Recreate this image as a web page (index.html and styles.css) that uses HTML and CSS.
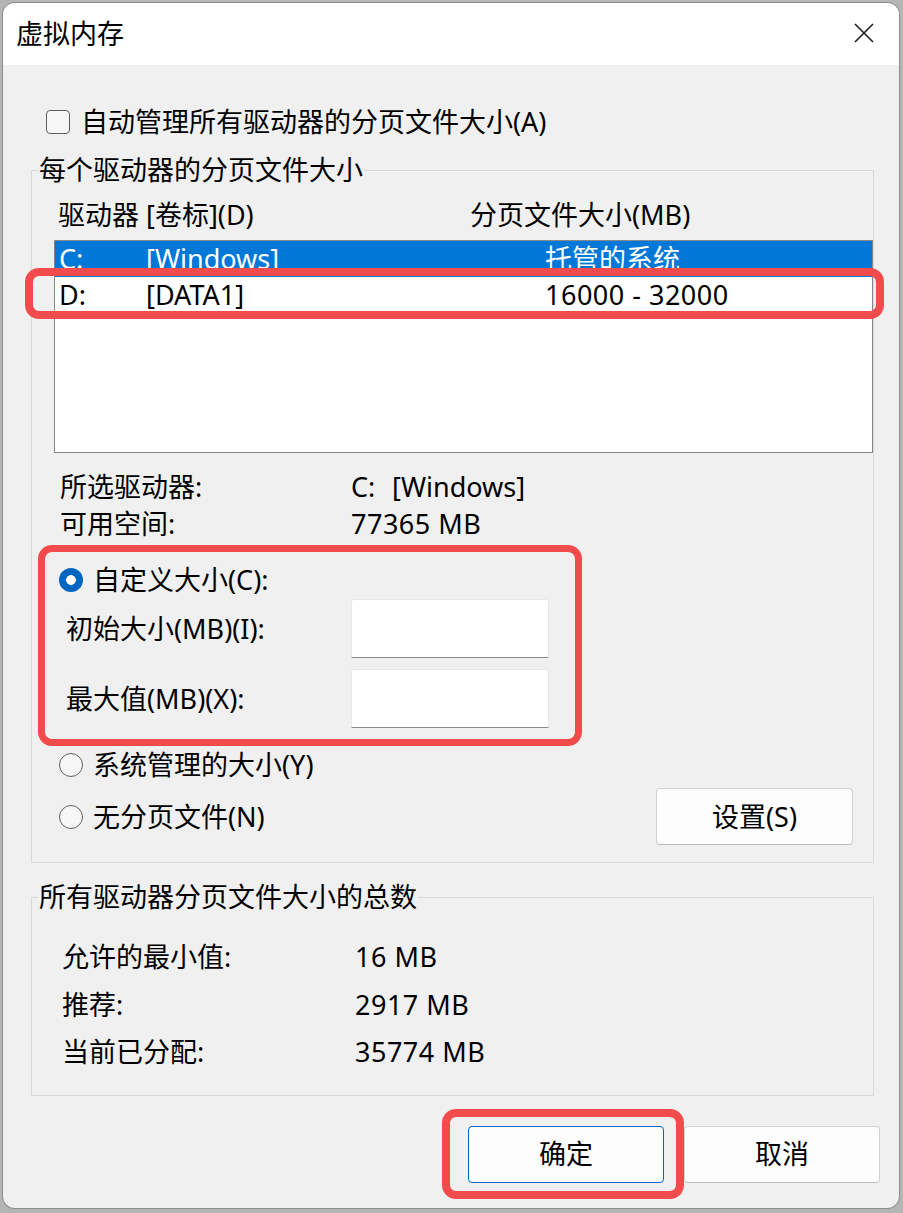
FILE: index.html
```html
<!DOCTYPE html>
<html lang="zh-CN">
<head>
<meta charset="utf-8">
<title>虚拟内存</title>
<link rel="stylesheet" href="styles.css">
</head>
<body>
<div class="screen">
  <div class="window">
    <header class="titlebar">
      <span class="title">虚拟内存</span>
      <svg class="close" viewBox="0 0 20 20" aria-label="关闭"><path d="M1 1L19 19M19 1L1 19" stroke="#1b1b1b" stroke-width="1.6" fill="none"/></svg>
    </header>
    <main class="body">
      <div class="check-row"><span class="checkbox"></span><span>自动管理所有驱动器的分页文件大小(A)</span></div>

      <fieldset class="group group-drives">
        <legend>每个驱动器的分页文件大小</legend>
        <div class="cols"><span class="col-drive">驱动器 [卷标](D)</span><span>分页文件大小(MB)</span></div>
        <div class="listbox">
          <div class="lrow sel"><span>C:</span><span>[Windows]</span><span>托管的系统</span></div>
          <div class="lrow"><span>D:</span><span>[DATA1]</span><span class="num">16000 - 32000</span></div>
        </div>
        <div class="info">
          <div class="irow"><span>所选驱动器:</span><span><span class="drv">C:</span>[Windows]</span></div>
          <div class="irow"><span>可用空间:</span><span class="num">77365 MB</span></div>
        </div>
        <div class="radio-row first"><span class="radio on"></span><span>自定义大小(C):</span></div>
        <div class="field-row"><span class="flabel">初始大小(MB)(I):</span><span class="input"></span></div>
        <div class="field-row second"><span class="flabel">最大值(MB)(X):</span><span class="input"></span></div>
        <div class="radio-row sys"><span class="radio"></span><span>系统管理的大小(Y)</span></div>
        <div class="last-row">
          <div class="radio-line"><span class="radio"></span><span>无分页文件(N)</span></div>
          <button class="btn set">设置(S)</button>
        </div>
      </fieldset>

      <fieldset class="group group-total">
        <legend>所有驱动器分页文件大小的总数</legend>
        <div class="trow"><span>允许的最小值:</span><span class="num">16 MB</span></div>
        <div class="trow"><span>推荐:</span><span class="num">2917 MB</span></div>
        <div class="trow"><span>当前已分配:</span><span class="num">35774 MB</span></div>
      </fieldset>

      <div class="actions">
        <button class="btn primary">确定</button>
        <button class="btn">取消</button>
      </div>
    </main>
  </div>
  <div class="mark mark-row"></div>
  <div class="mark mark-custom"></div>
  <div class="mark mark-ok"></div>
</div>
</body>
</html>
```
FILE: styles.css
```css
* { box-sizing: border-box; }
html, body { margin: 0; padding: 0; }
body {
  background: #b5b5b5;
  width: 903px;
  height: 1213px;
  overflow: hidden;
  font-family: "Noto Sans", "Noto Sans CJK SC", sans-serif;
  font-size: 27px;
  color: #000;
}
.screen {
  position: relative;
  width: 903px;
  height: 1213px;
  padding: 3px 0 0 3px;
}
.window {
  width: 896px;
  height: 1205px;
  background: #f0f0f0;
  border-radius: 12px;
  overflow: hidden;
  box-shadow: 0 0 0 1px #8c8c8c;
  display: flex;
  flex-direction: column;
}
.titlebar {
  height: 62px;
  flex: none;
  background: #fff;
  display: flex;
  align-items: center;
  justify-content: space-between;
  padding: 0 25px 0 13px;
}
.title { line-height: 30px; }
.close { width: 20px; height: 20px; margin-top: -2px; }

.body { padding: 39px 25px 0 28px; }

.num { letter-spacing: 0.5px; }

.check-row {
  display: flex;
  align-items: center;
  gap: 11px;
  height: 36px;
  padding-left: 15px;
  line-height: 36px;
}
.checkbox {
  width: 24px;
  height: 24px;
  border: 1.5px solid #5f5f5f;
  border-radius: 4px;
  background: #f6f6f6;
  flex: none;
}

.group {
  margin: 0;
  padding: 0;
  min-width: 0;
  border: 1px solid #d9d9d9;
}
.group legend {
  padding: 0 1px;
  margin-left: 6px;
  line-height: 30px;
  font-size: 27px;
}
.group-drives { margin-top: 15px; padding-bottom: 17px; }

.cols {
  display: flex;
  margin-top: 15px;
  padding-left: 26px;
  line-height: 30px;
}
.col-drive { width: 412px; }

.listbox {
  margin: 10px 0 0 22px;
  height: 213px;
  background: #fff;
  border: 1px solid #86888c;
}
.lrow {
  display: grid;
  grid-template-columns: 87px 399px 1fr;
  height: 36px;
  line-height: 36px;
  padding-left: 4px;
  white-space: nowrap;
}
.lrow.sel { background: #0078d7; color: #fff; }

.info { margin-top: 15px; }
.irow {
  display: grid;
  grid-template-columns: 291px 1fr;
  padding-left: 28px;
  line-height: 37px;
  height: 37px;
}
.drv { display: inline-block; width: 41px; }

.radio-row, .radio-line {
  display: flex;
  align-items: center;
  gap: 10px;
  height: 36px;
  line-height: 36px;
}
.radio-row { padding-left: 27px; }
.radio-row.first { margin-top: 20px; }
.radio-row.sys { margin-top: 19px; }
.radio {
  width: 24px;
  height: 24px;
  border-radius: 50%;
  border: 1.5px solid #5f5f5f;
  background: #f7f7f7;
  flex: none;
}
.radio.on {
  border: none;
  background: radial-gradient(circle, #fff 0 4.5px, #0067c0 5.2px);
}

.field-row {
  display: flex;
  align-items: center;
  height: 59px;
  margin-top: 1px;
  padding-left: 34px;
}
.field-row.second { margin-top: 11px; }
.flabel { width: 285px; line-height: 36px; }
.input {
  width: 198px;
  height: 59px;
  background: #fff;
  border: 1px solid #e8e8e8;
  border-bottom-color: #8a8a8a;
  border-radius: 3px 3px 0 0;
}

.last-row {
  display: flex;
  align-items: center;
  justify-content: space-between;
  height: 57px;
  margin-top: 5px;
  padding-left: 27px;
  padding-right: 20px;
}

.btn {
  font-family: inherit;
  font-size: 27px;
  color: #000;
  background: #fdfdfd;
  border: 1px solid #d0d0d0;
  border-bottom-color: #bdbdbd;
  border-radius: 4px;
  height: 57px;
  width: 196px;
  padding: 0;
  line-height: 36px;
}
.btn.set { width: 197px; }
.btn.primary { border: 1px solid #0067c0; }

.group-total { margin-top: 19px; padding-bottom: 19px; }
.trow {
  display: grid;
  grid-template-columns: 293px 1fr;
  padding-left: 30px;
  height: 47.5px;
  line-height: 47.5px;
}
.trow:first-of-type { margin-top: 21px; }

.actions {
  display: flex;
  justify-content: flex-end;
  gap: 20px;
  margin-top: 30px;
  margin-right: -6px;
}

.mark {
  position: absolute;
  border: 8px solid #f24b4b;
  border-radius: 14px;
  pointer-events: none;
}
.mark-row { left: 25px; top: 268px; width: 859px; height: 51px; }
.mark-custom { left: 38px; top: 545px; width: 544px; height: 201px; border-width: 7px; }
.mark-ok { left: 442px; top: 1109px; width: 242px; height: 90px; }
```
